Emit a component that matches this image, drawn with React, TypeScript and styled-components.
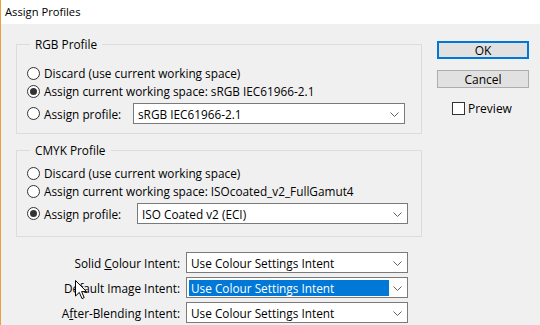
import styled, { createGlobalStyle } from "styled-components";

const GlobalStyle = createGlobalStyle`
  html, body {
    margin: 0;
    padding: 0;
    background: #f0f0f0;
  }
  body {
    font-family: "Open Sans", "Noto Sans", sans-serif;
    font-size: 11.8px;
    color: #000;
  }
`;

const intents = [
  { label: "Solid ", key: "C", rest: "olour Intent:", focused: false },
  { label: "Default Image Intent:", key: "", rest: "", focused: true },
  { label: "A", key: "f", rest: "ter-Blending Intent:", focused: false },
];

const App = () => {
  return (
    <>
      <GlobalStyle />
      <Window>
        <TitleBar>Assign Profiles</TitleBar>
        <Body>
          <LeftColumn>
            <GroupBox $padTop={12} $padBottom={9}>
              <Legend>RGB Profile</Legend>
              <RadioRow>
                <Radio />
                Discard (use current working space)
              </RadioRow>
              <RadioRow>
                <Radio $checked />
                Assign current working space: sRGB IEC61966-2.1
              </RadioRow>
              <ProfileRow>
                <Radio />
                <ProfileLabel $width={89}>Assign profile:</ProfileLabel>
                <Combo $width={272} value="sRGB IEC61966-2.1" />
              </ProfileRow>
            </GroupBox>

            <GroupBox $padTop={6} $padBottom={12} $gap={8}>
              <Legend>CMYK Profile</Legend>
              <RadioRow>
                <Radio />
                Discard (use current working space)
              </RadioRow>
              <RadioRow>
                <Radio />
                Assign current working space: ISOcoated_v2_FullGamut4
              </RadioRow>
              <ProfileRow>
                <Radio $checked />
                <ProfileLabel $width={93}>Assign profile:</ProfileLabel>
                <Combo $width={271} value="ISO Coated v2 (ECI)" />
              </ProfileRow>
            </GroupBox>

            <IntentGrid>
              {intents.map((it) => (
                <IntentRow key={it.label}>
                  <IntentLabel>
                    {it.label}
                    {it.key && <u>{it.key}</u>}
                    {it.rest}
                  </IntentLabel>
                  <Combo
                    $width={222}
                    value="Use Colour Settings Intent"
                    focused={it.focused}
                  />
                </IntentRow>
              ))}
            </IntentGrid>
          </LeftColumn>

          <RightColumn>
            <Button $primary>OK</Button>
            <Button>Cancel</Button>
            <CheckRow>
              <CheckBox />
              Preview
            </CheckRow>
          </RightColumn>
        </Body>
        <Cursor viewBox="0 0 12 20" width="12" height="20">
          <path
            d="M0.5 0.5 L0.5 16 L4.3 12.4 L7 18.6 L9.2 17.6 L6.6 11.6 L11.5 11.6 Z"
            fill="#fff"
            stroke="#000"
            strokeWidth="1"
            strokeLinejoin="miter"
          />
        </Cursor>
      </Window>
    </>
  );
};

export default App;

interface ComboProps {
  $width: number;
  value: string;
  focused?: boolean;
}

const Combo = ({ $width, value, focused }: ComboProps) => {
  return (
    <ComboBox $width={$width}>
      <ComboText $focused={focused}>{value}</ComboText>
      <Chevron viewBox="0 0 9 5" width="9" height="5">
        <path d="M0.5 0.5 L4.5 4.5 L8.5 0.5" fill="none" stroke="#606060" strokeWidth="1" />
      </Chevron>
    </ComboBox>
  );
};

const Window = styled.div`
  position: relative;
  width: 539px;
  height: 325px;
  border-left: 1px solid #eaa23a;
  overflow: hidden;
`;

const TitleBar = styled.div`
  height: 24px;
  line-height: 23px;
  background: #fff;
  padding-left: 4px;
  font-size: 11.2px;
  color: #000;
`;

const Body = styled.div`
  display: flex;
  align-items: flex-start;
  padding: 12px 0 0 15px;
`;

const LeftColumn = styled.div`
  width: 406px;
  display: flex;
  flex-direction: column;
`;

const GroupBox = styled.fieldset<{ $padTop: number; $padBottom: number; $gap?: number }>`
  margin: ${({ $gap }) => $gap ?? 0}px 0 0 0;
  padding: ${({ $padTop }) => $padTop}px 0 ${({ $padBottom }) => $padBottom}px 10px;
  border: 1px solid #dcdcdc;
  min-width: 0;
`;

const Legend = styled.legend`
  margin-left: 3px;
  padding: 0 5px;
  line-height: 16px;
`;

const RadioRow = styled.div`
  display: flex;
  align-items: center;
  height: 18px;
  white-space: nowrap;
`;

const ProfileRow = styled.div`
  display: flex;
  align-items: center;
  height: 21px;
  margin-top: 3px;
`;

const Radio = styled.span<{ $checked?: boolean }>`
  position: relative;
  box-sizing: border-box;
  flex: none;
  width: 13px;
  height: 13px;
  border: 1px solid #333;
  border-radius: 50%;
  background: #fff;
  margin-right: 4px;

  &::after {
    content: "";
    display: ${({ $checked }) => ($checked ? "block" : "none")};
    position: absolute;
    left: 2px;
    top: 2px;
    width: 7px;
    height: 7px;
    border-radius: 50%;
    background: #333;
  }
`;

const ProfileLabel = styled.span<{ $width: number }>`
  width: ${({ $width }) => $width}px;
  flex: none;
`;

const ComboBox = styled.div<{ $width: number }>`
  box-sizing: border-box;
  width: ${({ $width }) => $width}px;
  height: 21px;
  display: flex;
  align-items: stretch;
  border: 1px solid #7a7a7a;
  background: #fff;
  padding: 2px 0 1px 2px;
`;

const ComboText = styled.span<{ $focused?: boolean }>`
  flex: 1;
  display: flex;
  align-items: center;
  padding-left: 2px;
  margin-right: 18px;
  white-space: nowrap;
  background: ${({ $focused }) => ($focused ? "#0078d7" : "transparent")};
  color: ${({ $focused }) => ($focused ? "#fff" : "#000")};
`;

const Chevron = styled.svg`
  align-self: center;
  flex: none;
  margin: 1px 5px 0 -14px;
`;

const IntentGrid = styled.div`
  display: flex;
  flex-direction: column;
  gap: 4px;
  margin-top: 15px;
`;

const IntentRow = styled.div`
  display: grid;
  grid-template-columns: 164px 222px;
  column-gap: 6px;
  align-items: center;
`;

const IntentLabel = styled.span`
  text-align: right;
  white-space: nowrap;
`;

const RightColumn = styled.div`
  width: 92px;
  margin: 5px 0 0 15px;
  display: flex;
  flex-direction: column;
`;

const Button = styled.div<{ $primary?: boolean }>`
  box-sizing: border-box;
  height: 18px;
  display: flex;
  align-items: center;
  justify-content: center;
  background: #e1e1e1;
  border: ${({ $primary }) => ($primary ? "2px solid #0078d7" : "1px solid #adadad")};
  margin-bottom: 11px;
  font-size: 12px;
`;

const CheckRow = styled.div`
  display: flex;
  align-items: center;
  margin: 1px 0 0 15px;
  font-size: 12px;
`;

const CheckBox = styled.span`
  box-sizing: border-box;
  width: 13px;
  height: 13px;
  border: 1px solid #333;
  background: #fff;
  margin-right: 3px;
`;

const Cursor = styled.svg`
  position: absolute;
  left: 74px;
  top: 280px;
`;
